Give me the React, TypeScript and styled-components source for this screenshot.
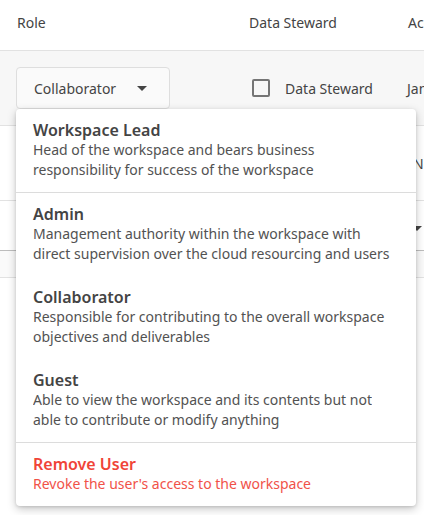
import React from 'react'
import styled, { createGlobalStyle } from 'styled-components'

const GlobalStyle = createGlobalStyle`
  body {
    margin: 0;
    background: #fff;
    font-family: 'Noto Sans', 'Open Sans', 'Liberation Sans', sans-serif;
    color: #444;
  }
`

interface RowProps {
  $h: number;
  $bg?: string;
  $line?: string;
}

interface ItemProps {
  $danger?: boolean;
  $divider?: boolean;
}

const roles = [
  { title: 'Workspace Lead', desc: 'Head of the workspace and bears business responsibility for success of the workspace', divider: true },
  { title: 'Admin', desc: 'Management authority within the workspace with direct supervision over the cloud resourcing and users' },
  { title: 'Collaborator', desc: 'Responsible for contributing to the overall workspace objectives and deliverables' },
  { title: 'Guest', desc: 'Able to view the workspace and its contents but not able to contribute or modify anything', divider: true },
]

export default function App() {
  return (
    <>
      <GlobalStyle />
      <Table>
        <Row $h={51}>
          <HeadCell>Role</HeadCell>
          <HeadCell>Data Steward</HeadCell>
          <HeadCell>Access</HeadCell>
        </Row>
        <Row $h={75} $bg="#f7f7f7">
          <Cell>
            <SelectWrap>
              <Select>
                Collaborator
                <Caret />
              </Select>
              <Menu>
                {roles.map(r => (
                  <Item key={r.title} $divider={r.divider}>
                    <ItemTitle>{r.title}</ItemTitle>
                    <ItemDesc>{r.desc}</ItemDesc>
                  </Item>
                ))}
                <Item $danger>
                  <ItemTitle>Remove User</ItemTitle>
                  <ItemDesc>Revoke the user's access to the workspace</ItemDesc>
                </Item>
              </Menu>
            </SelectWrap>
          </Cell>
          <Cell>
            <Check>
              <Box />
              Data Steward
            </Check>
          </Cell>
          <Cell>January 12, 2023</Cell>
        </Row>
        <Row $h={75}>
          <Cell />
          <Cell />
          <Cell $pad={22}>No access</Cell>
        </Row>
        <Row $h={50} $line="#bdbdbd">
          <Cell />
          <Cell />
          <Cell $pad={21}><Caret /></Cell>
        </Row>
        <Row $h={27} $bg="#fafafa" />
      </Table>
    </>
  )
}

const Table = styled.div`
  width: 424px;
  height: 515px;
  overflow: hidden;
`
const Row = styled.div<RowProps>`
  display: grid;
  grid-template-columns: 232px 159px 1fr;
  align-items: center;
  box-sizing: border-box;
  height: ${p => p.$h}px;
  background: ${p => p.$bg || '#fff'};
  border-bottom: 1px solid ${p => p.$line || '#e2e2e2'};
`
const HeadCell = styled.div`
  padding-left: 17px;
  font-size: 14px;
  color: #444;
  white-space: nowrap;
  padding-bottom: 6px;
`
const Cell = styled.div<{ $pad?: number }>`
  padding-left: ${p => p.$pad ?? 16}px;
  font-size: 14px;
  color: #444;
  white-space: nowrap;
`
const SelectWrap = styled.div`
  position: relative;
  width: 154px;
`
const Select = styled.div`
  display: flex;
  align-items: center;
  justify-content: space-between;
  box-sizing: border-box;
  height: 42px;
  padding: 0 22px 0 17px;
  background: #fafafa;
  border: 1px solid #dedede;
  border-radius: 4px;
  font-size: 14px;
  color: #444;
`
const Caret = styled.span`
  display: inline-block;
  width: 0;
  height: 0;
  border-left: 5px solid transparent;
  border-right: 5px solid transparent;
  border-top: 5px solid #444;
`
const Check = styled.label`
  display: flex;
  align-items: center;
  gap: 15px;
  padding-left: 4px;
`
const Box = styled.span`
  width: 14px;
  height: 14px;
  border: 2px solid #757575;
  border-radius: 2px;
`
const Menu = styled.div`
  position: absolute;
  top: 42px;
  left: 0;
  z-index: 10;
  width: 400px;
  background: #fff;
  border-radius: 4px;
  box-shadow: 0 3px 10px rgba(0, 0, 0, 0.22), 0 1px 3px rgba(0, 0, 0, 0.12);
`
const Item = styled.div<ItemProps>`
  padding: 11px 16px 12px 17px;
  border-bottom: ${p => (p.$divider ? '1px solid #dcdcdc' : 'none')};
  color: ${p => (p.$danger ? '#f04438' : '#444')};
  white-space: normal;
`
const ItemTitle = styled.div`
  font-size: 16px;
  line-height: 20px;
  font-weight: 600;
`
const ItemDesc = styled.div`
  font-size: 14px;
  line-height: 20px;
  opacity: 0.92;
`
